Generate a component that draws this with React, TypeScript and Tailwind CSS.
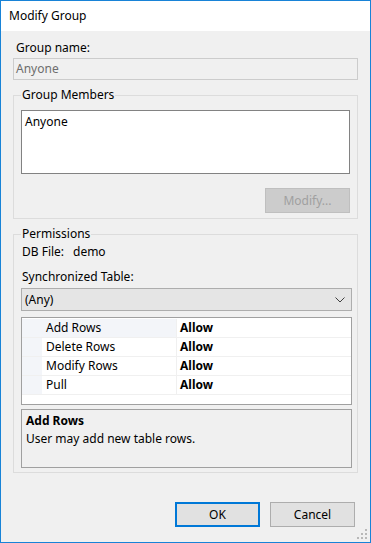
import React from 'react';

const rows = [
  { name: 'Add Rows', value: 'Allow', selected: true },
  { name: 'Delete Rows', value: 'Allow' },
  { name: 'Modify Rows', value: 'Allow' },
  { name: 'Pull', value: 'Allow' },
];

function Chevron() {
  return (
    <svg width="10" height="6" viewBox="0 0 10 6" className="block">
      <path d="M0.5 0.5 L5 5 L9.5 0.5" fill="none" stroke="#404040" strokeWidth="1" />
    </svg>
  );
}

function Grip() {
  const dots = [
    [8, 0], [4, 4], [8, 4], [0, 8], [4, 8], [8, 8],
  ];
  return (
    <svg width="11" height="11" viewBox="0 0 11 11" className="absolute right-[2px] bottom-[2px]">
      {dots.map(([x, y], i) => (
        <rect key={i} x={x} y={y} width="2" height="2" fill="#b8b8b8" />
      ))}
    </svg>
  );
}

export default function App() {
  return (
    <div
      className="relative w-[371px] h-[543px] border border-[#1883d7] bg-[#f0f0f0] flex flex-col text-[12px] leading-[16px] text-black"
      style={{ fontFamily: '"Noto Sans", "Open Sans", sans-serif' }}
    >
      <div className="h-[30px] bg-white flex items-center pl-[8px] shrink-0">
        <span className="text-[12px]">Modify Group</span>
      </div>

      <div className="flex flex-col px-[12px] pt-[9px]">
        <div className="pl-[3px]">Group name:</div>
        <div className="mt-[2px] h-[22px] border border-[#cccccc] bg-[#f0f0f0] flex items-center pl-[2px] text-[#6d6d6d]">
          Anyone
        </div>

        <fieldset className="mt-[7px] border border-[#dcdcdc] px-[7px] pb-[5px]">
          <legend className="px-[1px] leading-[16px]">Group Members</legend>
          <div className="mt-[7px] h-[64px] border border-[#828282] bg-white pl-[3px] pt-[3px]">Anyone</div>
          <div className="mt-[14px] flex justify-end">
            <button className="w-[85px] h-[25px] border border-[#bfbfbf] bg-[#cccccc] text-[#a0a0a0]">
              Modify...
            </button>
          </div>
        </fieldset>

        <fieldset className="mt-[7px] border border-[#dcdcdc] pl-[7px] pr-[5px] pb-[4px]">
          <legend className="px-[1px] leading-[16px]">Permissions</legend>
          <div className="mt-[2px] flex">
            <span className="w-[52px] pl-[1px]">DB File:</span>
            <span>demo</span>
          </div>
          <div className="mt-[9px] pl-[1px]">Synchronized Table:</div>
          <div className="mt-[3px] h-[23px] border border-[#adadad] bg-[#e5e5e5] flex items-center justify-between pl-[3px] pr-[6px]">
            <span>(Any)</span>
            <Chevron />
          </div>

          <div className="mt-[6px] h-[88px] border border-[#a0a0a0] bg-white pt-[1px]">
            {rows.map((r) => (
              <div key={r.name} className="flex h-[19px] border-b border-[#f0f0f0]">
                <div className="w-[20px] bg-[#f3f5f9]" />
                <div className={`w-[135px] pl-[4px] flex items-center border-r border-[#f0f0f0] ${r.selected ? 'bg-[#f3f5f9]' : ''}`}>
                  {r.name}
                </div>
                <div className="flex-1 pl-[3px] flex items-center font-bold">{r.value}</div>
              </div>
            ))}
          </div>

          <div className="mt-[4px] h-[59px] border border-[#a0a0a0] bg-[#f0f0f0] pl-[4px] pt-[3px]">
            <div className="font-bold">Add Rows</div>
            <div className="mt-[2px]">User may add new table rows.</div>
          </div>
        </fieldset>
      </div>

      <div className="mt-auto mb-[15px] flex justify-end gap-[10px] pr-[15px]">
        <button className="w-[85px] h-[25px] border-2 border-[#0078d7] bg-[#e1e1e1]">OK</button>
        <button className="w-[85px] h-[25px] border border-[#adadad] bg-[#e1e1e1]">Cancel</button>
      </div>

      <Grip />
    </div>
  );
}
